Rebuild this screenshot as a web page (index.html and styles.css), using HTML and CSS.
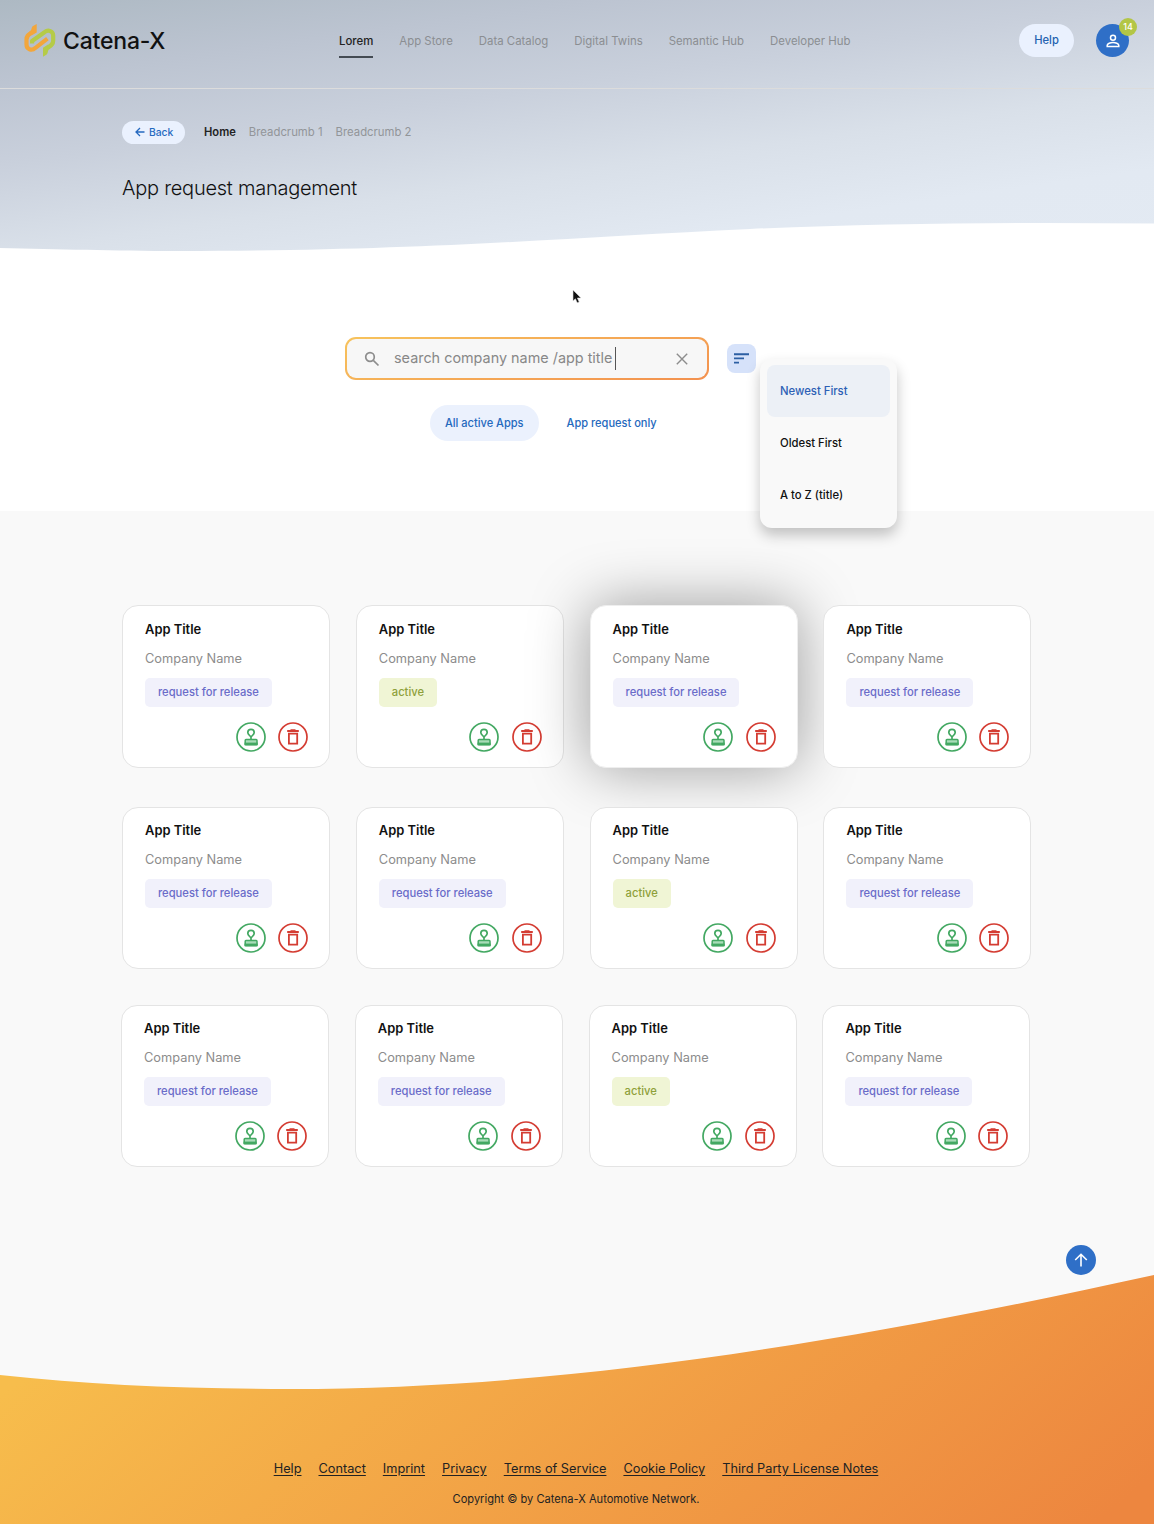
FILE: index.html
```html
<!DOCTYPE html>
<html lang="en">
<head>
<meta charset="utf-8">
<title>App request management</title>
<link rel="stylesheet" href="styles.css">
</head>
<body>
<svg width="0" height="0" class="defs" aria-hidden="true">
  <symbol id="stamp" viewBox="0 0 30 30">
    <circle cx="15" cy="15" r="14" fill="none" stroke="#43a862" stroke-width="1.7"/>
    <path d="M15 15c-2-2.200-3.200-2.800-3.200-4.400a3.200 3.200 0 0 1 6.400 0c0 1.600-1.200 2.200-3.200 4.400zV18" fill="none" stroke="#43a862" stroke-width="1.700"/>
    <rect x="9.200" y="17.600" width="11.800" height="5.200" rx=".8" fill="#a9dcb8" stroke="#43a862" stroke-width="1.500"/>
    <path d="M8.500 21.900h13.200" stroke="#43a862" stroke-width="2.600"/>
  </symbol>
  <symbol id="trash" viewBox="0 0 30 30">
    <circle cx="15" cy="15" r="14" fill="none" stroke="#d43c32" stroke-width="1.700"/>
    <path d="M9.200 9h11.600M12.500 8.300h5" fill="none" stroke="#d43c32" stroke-width="1.900"/>
    <path d="M10.900 11.600h8.300v10h-8.300z" fill="none" stroke="#d43c32" stroke-width="1.800"/>
  </symbol>
</svg>
<header class="hero">
  <div class="topbar">
    <a class="brand">
      <svg width="34" height="36" viewBox="0 0 34 36" fill="none" stroke-width="4.200" stroke-linejoin="round">
        <path d="M24.400 16.700 12.500 25.800C8.500 29.700 3.500 27 3.500 22.500V17.500C3.500 13.500 5.500 12.500 8.500 10.500" stroke="#f3a63b"/>
        <path d="M13.700 2v8.500L8.500 13.500 6.600 9.500C9.500 7.500 8 5.500 10 4z" fill="#f3a63b"/>
        <path d="M9.100 21.500V19L21.500 10.200C25.500 7 30.200 9.500 30.200 13.500V18.500C30.200 22.500 28 23.700 25 25.500" stroke="#b5cb48"/>
        <path d="M20 34.800v-9L25 22.500 27 26.600C24 28.700 25.500 31 23.700 32.500z" fill="#b5cb48"/>
      </svg>
      <span>Catena-X</span>
    </a>
    <nav class="nav">
      <a class="on">Lorem</a><a>App Store</a><a>Data Catalog</a><a>Digital Twins</a><a>Semantic Hub</a><a>Developer Hub</a>
    </nav>
    <div class="tools">
      <a class="help">Help</a>
      <a class="user">
        <svg width="16" height="16" viewBox="0 0 16 16" fill="none" stroke="#fff" stroke-width="1.500"><circle cx="8" cy="4.700" r="2.500"/><path d="M2.200 13.500v-1.200c0-1.700 3.300-2.700 5.800-2.700s5.800 1 5.800 2.700v1.200z"/></svg>
        <span class="badge">14</span>
      </a>
    </div>
  </div>
  <div class="crumbs">
    <a class="back"><svg width="10" height="10" viewBox="0 0 10 10" fill="none" stroke="#2569c0" stroke-width="1.300"><path d="M9.500 5H1M5 1 1 5l4 4"/></svg><span>Back</span></a>
    <b>Home</b><span>Breadcrumb 1</span><span>Breadcrumb 2</span>
  </div>
  <h1>App request management</h1>
</header>
<section class="finder">
  <div class="searchrow">
    <div class="search">
      <svg width="16" height="16" viewBox="0 0 16 16" fill="none" stroke="#8d8d8d" stroke-width="1.700"><circle cx="6" cy="6" r="4.300"/><path d="m9.300 9.300 5.200 5.200"/></svg>
      <span class="query">search company name /app title</span><i class="caret"></i>
      <svg class="clear" width="12" height="12" viewBox="0 0 12 12" stroke="#8d8d8d" stroke-width="1.400"><path d="m.8.8 10.400 10.400M11.200.8.8 11.200"/></svg>
    </div>
    <div class="sort">
      <svg width="15" height="11" viewBox="0 0 15 11" stroke="#2c5fa3" stroke-width="1.900"><path d="M0 1.200h15M0 5.400h10M0 9.600h5"/></svg>
      <div class="menu"><a class="picked">Newest First</a><a>Oldest First</a><a>A to Z (title)</a></div>
    </div>
  </div>
  <div class="tabs"><a class="tab active">All active Apps</a><a class="tab">App request only</a></div>
  <svg class="pointer" width="10" height="16" viewBox="0 0 10 16"><path d="M1 1v11l2.400-2.200 1.800 4 2-.9-1.800-3.900H9z" fill="#111" stroke="#ddd" stroke-width=".6"/></svg>
</section>
<main class="apps">
  <div class="row">
    <article class="card"><h2>App Title</h2><p>Company Name</p><span class="tag">request for release</span><div class="acts"><svg><use href="#stamp"/></svg><svg><use href="#trash"/></svg></div></article>
    <article class="card"><h2>App Title</h2><p>Company Name</p><span class="tag live">active</span><div class="acts"><svg><use href="#stamp"/></svg><svg><use href="#trash"/></svg></div></article>
    <article class="card raised"><h2>App Title</h2><p>Company Name</p><span class="tag">request for release</span><div class="acts"><svg><use href="#stamp"/></svg><svg><use href="#trash"/></svg></div></article>
    <article class="card"><h2>App Title</h2><p>Company Name</p><span class="tag">request for release</span><div class="acts"><svg><use href="#stamp"/></svg><svg><use href="#trash"/></svg></div></article>
  </div>
  <div class="row">
    <article class="card"><h2>App Title</h2><p>Company Name</p><span class="tag">request for release</span><div class="acts"><svg><use href="#stamp"/></svg><svg><use href="#trash"/></svg></div></article>
    <article class="card"><h2>App Title</h2><p>Company Name</p><span class="tag">request for release</span><div class="acts"><svg><use href="#stamp"/></svg><svg><use href="#trash"/></svg></div></article>
    <article class="card"><h2>App Title</h2><p>Company Name</p><span class="tag live">active</span><div class="acts"><svg><use href="#stamp"/></svg><svg><use href="#trash"/></svg></div></article>
    <article class="card"><h2>App Title</h2><p>Company Name</p><span class="tag">request for release</span><div class="acts"><svg><use href="#stamp"/></svg><svg><use href="#trash"/></svg></div></article>
  </div>
  <div class="row last">
    <article class="card"><h2>App Title</h2><p>Company Name</p><span class="tag">request for release</span><div class="acts"><svg><use href="#stamp"/></svg><svg><use href="#trash"/></svg></div></article>
    <article class="card"><h2>App Title</h2><p>Company Name</p><span class="tag">request for release</span><div class="acts"><svg><use href="#stamp"/></svg><svg><use href="#trash"/></svg></div></article>
    <article class="card"><h2>App Title</h2><p>Company Name</p><span class="tag live">active</span><div class="acts"><svg><use href="#stamp"/></svg><svg><use href="#trash"/></svg></div></article>
    <article class="card"><h2>App Title</h2><p>Company Name</p><span class="tag">request for release</span><div class="acts"><svg><use href="#stamp"/></svg><svg><use href="#trash"/></svg></div></article>
  </div>
  <a class="totop"><svg width="14" height="14" viewBox="0 0 14 14" fill="none" stroke="#fff" stroke-width="1.600"><path d="M7 13.500V1.500M1.200 7 7 1.300 12.800 7"/></svg></a>
</main>
<footer class="footer">
  <div class="links"><a>Help</a><a>Contact</a><a>Imprint</a><a>Privacy</a><a>Terms of Service</a><a>Cookie Policy</a><a>Third Party License Notes</a></div>
  <p>Copyright © by Catena-X Automotive Network.</p>
</footer>
</body>
</html>
```
FILE: styles.css
```css
* { box-sizing: border-box; }
body { margin: 0; width: 1154px; height: 1524px; overflow: hidden; background: #fff; color: #111; font-family: Inter, "Liberation Sans", sans-serif; white-space: nowrap; }
h1, h2, p { margin: 0; font-weight: 400; }
svg { display: block; flex: none; }
.defs { position: absolute; }
.hero { height: 252px; background: linear-gradient(172deg, #adb9c3 0%, #bcc4d1 20%, #c9d0dc 40%, #d9e0e9 61%, #e2e9f2 80%, #e3eaf3 100%); clip-path: path("M0 0H1154V223.500C1020 222 880 223 750 229C560 238 420 251 180 251C110 251 60 249 0 248Z"); }
.topbar { height: 89px; border-bottom: 1px solid #dcdcdc; display: flex; align-items: flex-start; }
.brand { display: flex; width: 339px; padding: 22px 0 0 23px; }
.brand span { margin-left: 6px; font: 500 23px/38px Inter, sans-serif; letter-spacing: -.2px; }
.nav { display: flex; gap: 26px; padding-top: 32px; font-size: 11.400px; line-height: 18px; color: #8b8e92; }
.nav .on { color: #222; font-weight: 500; height: 26px; border-bottom: 2px solid #444b53; }
.tools { margin-left: auto; padding: 24px 25px 0 0; display: flex; gap: 22px; }
.help { width: 55px; height: 33px; border-radius: 17px; background: #eaf1fe; color: #2462b0; font: 500 11.200px/33px Inter, sans-serif; text-align: center; }
.user { width: 33px; height: 33px; border-radius: 50%; background: #2f6fc7; position: relative; display: grid; place-items: center; }
.badge { position: absolute; left: 23px; top: -6px; width: 18px; height: 18px; border-radius: 50%; background: #b3c646; color: #fff; font: 500 9px/18px Inter, sans-serif; text-align: center; }
.crumbs { margin: 32px 0 0 122px; height: 22px; display: flex; align-items: center; font-size: 11.350px; color: #929599; }
.crumbs b { color: #222; font-weight: 600; font-size: 11.200px; margin: 0 13px 0 19px; }
.crumbs > span { margin-right: 13px; }
.back { width: 63px; height: 23px; border-radius: 12px; background: #eaf1fe; color: #2569c0; font-size: 10.300px; font-weight: 500; display: flex; align-items: center; gap: 4px; padding-left: 13px; }
h1 { margin: 31px 0 0 122px; font-size: 20px; line-height: 28px; font-weight: 300; letter-spacing: -.25px; }
.finder { height: 259px; position: relative; }
.searchrow { display: flex; align-items: center; gap: 18px; padding: 85px 0 0 345px; }
.search { width: 364px; height: 43px; border: 2px solid transparent; border-radius: 11px; background: linear-gradient(#f7f7f7, #f7f7f7) padding-box, linear-gradient(165deg, #f7c35c, #f3914f) border-box; display: flex; align-items: center; padding: 0 19px 0 17px; color: #888; }
.query { margin-left: 14px; padding-bottom: 2px; font-size: 14.400px; }
.caret { width: 1px; height: 23px; background: #555; margin-left: 3px; }
.clear { margin-left: auto; }
.sort { width: 29px; height: 29px; border-radius: 8px; background: #d6e2fa; display: grid; place-items: center; position: relative; }
.menu { position: absolute; z-index: 5; left: 33px; top: 15px; width: 137px; height: 169px; padding: 6px 7px; border-radius: 12px; background: #f9f9f9; box-shadow: 0 7px 14px rgba(0,0,0,.23); font-size: 11.300px; font-weight: 500; line-height: 52px; }
.menu a { display: block; height: 52px; padding-left: 13px; }
.menu .picked { color: #2c60b5; background: #ecf0f6; border-radius: 8px; }
.tabs { display: flex; padding: 25px 0 0 430px; gap: 13px; }
.tab { height: 36px; padding: 0 15px; line-height: 37px; font-size: 11.050px; font-weight: 500; color: #2569bd; border-radius: 18px; }
.tab.active { background: #ebf1fd; }
.pointer { position: absolute; left: 572px; top: 37px; }
.apps { height: 1013px; background: #f9f9f9; padding-top: 94px; }
.row { display: grid; grid-template-columns: repeat(4, 208px); gap: 25.800px; height: 163px; margin: 0 0 39px 122px; }
.row + .row { height: 162px; }
.row.last { margin: -3px 0 0 121px; }
.card { background: #fff; border: 1px solid #e4e4e4; border-radius: 16px; padding: 14px 21px 0 22px; }
.row + .row .card { padding-top: 13px; }
.card.raised { border-color: #eee; box-shadow: 0 0 60px rgba(0,0,0,.38); }
.card h2 { font-size: 12.900px; line-height: 20px; font-weight: 600; }
.card p { font-size: 12.800px; line-height: 20px; margin-top: 9px; color: #8c8c8c; }
.tag { display: inline-block; margin-top: 9px; height: 29px; padding: 0 13px; border-radius: 5px; background: #f1f1fb; color: #6a6cc9; font-size: 11.200px; line-height: 29px; font-weight: 500; }
.tag.live { background: #f0f5d5; color: #8ea03a; }
.acts { display: flex; justify-content: flex-end; gap: 12.500px; margin-top: 15px; }
.acts svg { width: 30px; height: 30px; }
.totop { display: grid; place-items: center; width: 30px; height: 30px; margin: 78px 0 0 1066px; border-radius: 50%; background: #2f6fc7; }
.footer { position: relative; height: 250px; margin-top: -250px; background: linear-gradient(140deg, #f7bd4c 10%, #ed863f 96%); clip-path: path("M0 101C90 111 190 115 290 115C560 115 840 70 1154 1V250H0Z"); padding-top: 185px; text-align: center; color: #222; }
.links { display: flex; justify-content: center; gap: 17px; padding-right: 2px; font-size: 12.750px; line-height: 20px; }
.links a { text-decoration: underline; text-underline-offset: 2px; }
.footer p { margin-top: 11px; font-size: 11.100px; line-height: 18px; padding-right: 2px; }
```
